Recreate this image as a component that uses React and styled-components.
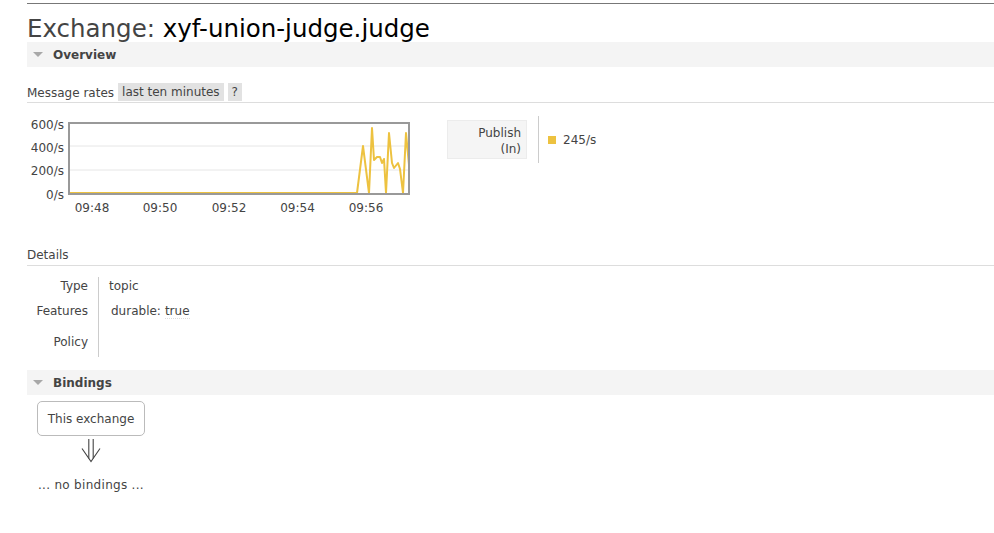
import React from "react";
import styled, { createGlobalStyle } from "styled-components";

const GlobalStyle = createGlobalStyle`
    body {
        margin: 0;
        background: #fff;
        font-family: "DejaVu Sans", Verdana, sans-serif;
        font-size: 12px;
        color: #444;
    }
`;

const Page = styled.div`
    padding: 3px 0 0 27px;
`;

const TopRule = styled.div`
    border-top: 1px solid #777;
`;

const Title = styled.h1`
    margin: 11px 0 0;
    font-size: 24.5px;
    line-height: 27px;
    font-weight: normal;
    color: #444;
    span {
        color: #000;
    }
`;

const SectionBar = styled.div`
    display: flex;
    align-items: center;
    height: 25px;
    margin-top: ${(p) => p.$top || 0}px;
    padding-left: 6px;
    background-color: #f4f4f4;
    font-weight: bold;
    color: #444;
`;

const Triangle = styled.span`
    width: 0;
    height: 0;
    margin-right: 10px;
    border-left: 5px solid transparent;
    border-right: 5px solid transparent;
    border-top: 5px solid #a8a8a8;
`;

const RatesHeader = styled.div`
    display: flex;
    align-items: flex-end;
    gap: 4px;
    margin-top: 16px;
    height: 19px;
    border-bottom: 1px solid #ddd;
`;

const RatesLabel = styled.span`
    line-height: 18px;
`;

const Chip = styled.span`
    display: inline-block;
    height: 18px;
    line-height: 18px;
    margin-bottom: 1px;
    padding: 0 4px;
    background-color: #e2e2e2;
    color: #444;
`;

const RatesRow = styled.div`
    display: flex;
    align-items: flex-start;
    margin-top: 10px;
`;

const Chart = styled.svg`
    display: block;
    flex: none;
    text {
        font-family: "DejaVu Sans", Verdana, sans-serif;
        font-size: 12px;
        fill: #444;
    }
`;

const Stats = styled.div`
    display: flex;
    align-items: flex-start;
    margin: 3px 0 0 30px;
`;

const StatLabel = styled.div`
    box-sizing: border-box;
    width: 80px;
    height: 39px;
    margin-top: 4px;
    padding: 4px 5px 0 0;
    background-color: #f5f5f5;
    border: 1px solid #ececec;
    text-align: right;
    line-height: 16px;
`;

const StatValue = styled.div`
    display: flex;
    align-items: center;
    height: 47px;
    margin-left: 11px;
    padding-left: 9px;
    border-left: 1px solid #ccc;
`;

const Swatch = styled.span`
    width: 8px;
    height: 8px;
    margin-right: 7px;
    background-color: ${(p) => p.$color};
`;

const SubHeading = styled.div`
    margin-top: 29px;
    line-height: 16px;
    padding-bottom: 2px;
    border-bottom: 1px solid #ddd;
`;

const Facts = styled.div`
    display: grid;
    grid-template-columns: 72px auto;
    margin-top: 11px;
`;

const FactKey = styled.div`
    display: flex;
    align-items: center;
    justify-content: flex-end;
    height: ${(p) => p.$h}px;
    padding-right: 10px;
    border-right: 1px solid #ccc;
`;

const FactValue = styled.div`
    display: flex;
    align-items: center;
    height: ${(p) => p.$h}px;
    padding-left: ${(p) => p.$indent || 10}px;
`;

const Muted = styled.span`
    margin-left: 4px;
    border-bottom: 1px dotted #ddd;
`;

const Bindings = styled.div`
    display: flex;
    flex-direction: column;
    align-items: flex-start;
    padding-left: 10px;
`;

const Node = styled.div`
    box-sizing: border-box;
    width: 108px;
    height: 35px;
    margin-top: 6px;
    border: 1px solid #bbb;
    border-radius: 5px;
    display: flex;
    align-items: center;
    justify-content: center;
`;

const ArrowRow = styled.div`
    display: flex;
    justify-content: center;
    width: 108px;
    margin-top: 3px;
`;

const Empty = styled.div`
    margin: 14px 0 0 1px;
    line-height: 16px;
    letter-spacing: 0.3px;
`;

const points = [
    [43, 80], [330, 80], [336, 33], [342, 80], [345, 15], [347, 47],
    [350, 44], [353, 44], [355, 50], [357, 46], [359, 80], [362, 20],
    [365, 50], [367, 55], [371, 50], [373, 56], [376, 80], [379, 20], [382, 52],
];

const yLabels = [
    ["600/s", 16],
    ["400/s", 39],
    ["200/s", 62],
    ["0/s", 85.5],
];

const xLabels = [
    ["09:48", 65],
    ["09:50", 133],
    ["09:52", 202],
    ["09:54", 270.5],
    ["09:56", 339],
];

const RateChart = () => (
    <Chart width="390" height="105" viewBox="0 0 390 105">
        <defs>
            <clipPath id="plot">
                <rect x="43" y="11" width="338" height="70" />
            </clipPath>
        </defs>
        <line x1="43" y1="33" x2="381" y2="33" stroke="#e6e6e6" />
        <line x1="43" y1="57" x2="381" y2="57" stroke="#e6e6e6" />
        <polyline
            points={points.map((p) => p.join(",")).join(" ")}
            fill="none"
            stroke="#edc240"
            strokeWidth="2"
            strokeLinejoin="round"
            clipPath="url(#plot)"
        />
        <rect x="42" y="10" width="340" height="71" fill="none" stroke="#999" strokeWidth="2" />
        {yLabels.map(([t, y]) => (
            <text key={t} x="37" y={y} textAnchor="end">{t}</text>
        ))}
        {xLabels.map(([t, x]) => (
            <text key={t} x={x} y="98.5" textAnchor="middle">{t}</text>
        ))}
    </Chart>
);

const DownArrow = () => (
    <svg width="20" height="24" viewBox="0 0 20 24">
        <g fill="none" stroke="#444" strokeWidth="1.1">
            <path d="M7.8 0V19.5M12.2 0V19.5" />
            <path d="M1 9.5L10 22.5L19 9.5" />
        </g>
    </svg>
);

const App = () => {
    return (
        <Page>
            <GlobalStyle />
            <TopRule />
            <Title>Exchange: <span>xyf-union-judge.judge</span></Title>

            <SectionBar><Triangle />Overview</SectionBar>

            <RatesHeader>
                <RatesLabel>Message rates</RatesLabel>
                <Chip>last ten minutes</Chip>
                <Chip>?</Chip>
            </RatesHeader>

            <RatesRow>
                <RateChart />
                <Stats>
                    <StatLabel>Publish<br />(In)</StatLabel>
                    <StatValue>
                        <Swatch $color="#edc240" />
                        245/s
                    </StatValue>
                </Stats>
            </RatesRow>

            <SubHeading>Details</SubHeading>
            <Facts>
                <FactKey $h={18}>Type</FactKey>
                <FactValue $h={18}>topic</FactValue>
                <FactKey $h={32}>Features</FactKey>
                <FactValue $h={32} $indent={12}>durable:<Muted>true</Muted></FactValue>
                <FactKey $h={30}>Policy</FactKey>
                <FactValue $h={30} />
            </Facts>

            <SectionBar $top={13}><Triangle />Bindings</SectionBar>
            <Bindings>
                <Node>This exchange</Node>
                <ArrowRow><DownArrow /></ArrowRow>
                <Empty>... no bindings ...</Empty>
            </Bindings>
        </Page>
    );
};

export default App;
